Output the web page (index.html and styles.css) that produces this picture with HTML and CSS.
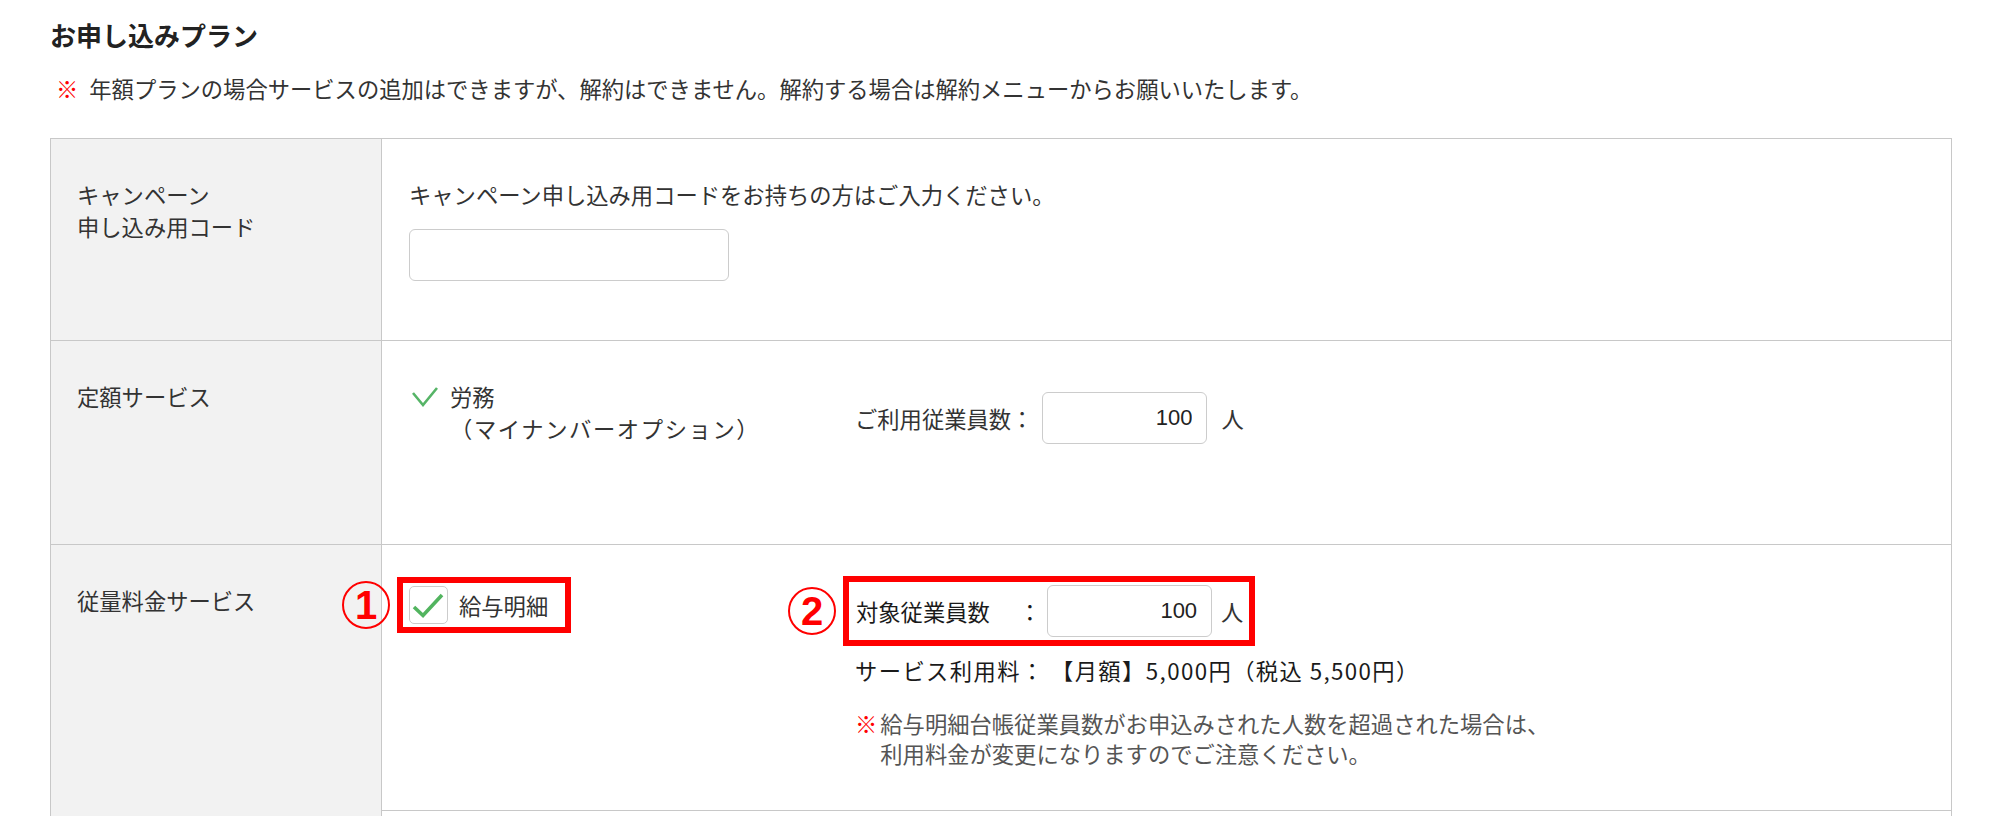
FILE: index.html
```html
<!DOCTYPE html>
<html lang="ja">
<head>
    <meta charset="UTF-8">
    <title>お申し込みプラン</title>
    <link rel="stylesheet" href="styles.css">
</head>
<body>
<div class="page">
    <h2 class="title">お申し込みプラン</h2>
    <p class="notice"><span class="kome">※</span>年額プランの場合サービスの追加はできますが、解約はできません。解約する場合は解約メニューからお願いいたします。</p>

    <div class="plan">
        <!-- キャンペーンコード -->
        <div class="plan-label">キャンペーン<br>申し込み用コード</div>
        <div class="plan-body">
            <p class="lead">キャンペーン申し込み用コードをお持ちの方はご入力ください。</p>
            <input class="code-input" type="text">
        </div>

        <!-- 定額サービス -->
        <div class="plan-label">定額サービス</div>
        <div class="plan-body plan-cols">
            <div class="fixed-item">
                <svg class="tick" width="28" height="22" viewBox="0 0 28 22">
                    <polyline points="2,8 12,20 26,3" fill="none" stroke="#56b467" stroke-width="2.6"/>
                </svg>
                <div>労務<br><span class="option">（マイナンバーオプション）</span></div>
            </div>
            <div class="count-row count-fixed">
                <span>ご利用従業員数：</span>
                <input class="count-input" type="text" value="100">
                <span class="unit">人</span>
            </div>
        </div>

        <!-- 従量料金サービス -->
        <div class="plan-label plan-label-tall">従量料金サービス</div>
        <div class="plan-body plan-cols metered">
            <div>
                <label class="mark mark-1">
                    <span class="num">1</span>
                    <span class="checkbox">
                        <svg width="39" height="38" viewBox="0 0 39 38">
                            <polyline points="5,21 14,29.5 33,9" fill="none" stroke="#52b45f" stroke-width="3.6"/>
                        </svg>
                    </span>
                    給与明細
                </label>
            </div>
            <div>
                <div class="mark mark-2 count-row">
                    <span class="num">2</span>
                    <span>対象従業員数</span>
                    <span class="colon">：</span>
                    <input class="count-input" type="text" value="100">
                    <span class="unit">人</span>
                </div>
                <p class="fee">サービス利用料： 【月額】5,000円（税込 5,500円）</p>
                <p class="caution"><span class="kome">※</span><span>給与明細台帳従業員数がお申込みされた人数を超過された場合は、<br>利用料金が変更になりますのでご注意ください。</span></p>
            </div>
        </div>

        <div class="plan-body"></div>
    </div>
</div>
</body>
</html>
```

FILE: styles.css
```css
body {
    margin: 0;
    background: #fff;
    color: #333;
    font-family: "Noto Sans CJK JP", "Noto Sans", sans-serif;
    font-size: 22.3px;
}

.page {
    padding: 16px 0 0 50px;
}

.title {
    margin: 0;
    font-size: 26px;
    line-height: 38px;
    font-weight: bold;
    color: #222;
}

.notice {
    margin: 18px 0 0;
    line-height: 32px;
}

.kome {
    color: #f00;
    font-weight: bold;
}

.notice .kome {
    margin: 0 11px 0 6px;
}

.plan {
    display: grid;
    grid-template-columns: 331px 1fr;
    grid-template-rows: 202px 204px 266px 120px;
    width: 1902px;
    margin-top: 34px;
    border-top: 1px solid #c8c8c8;
    border-left: 1px solid #c8c8c8;
    box-sizing: border-box;
}

.plan-label,
.plan-body {
    border-right: 1px solid #c8c8c8;
    border-bottom: 1px solid #c8c8c8;
    box-sizing: border-box;
    line-height: 32px;
}

.plan-label {
    background: #f2f2f2;
    padding: 39px 0 0 26px;
}

.plan-label-tall {
    grid-row: span 2;
}

.plan-body {
    padding: 39px 0 0 27px;
}

.lead {
    margin: 0;
}

.code-input {
    display: block;
    width: 320px;
    height: 52px;
    margin-top: 19px;
    border: 1px solid #ccc;
    border-radius: 6px;
    box-sizing: border-box;
}

.plan-cols {
    display: grid;
    grid-template-columns: 446px 1fr;
    align-items: start;
}

.fixed-item {
    display: flex;
}

.option {
    letter-spacing: 1.6px;
}

.tick {
    margin: 5px 11px 0 2px;
    flex: none;
}

.count-row {
    display: flex;
    align-items: center;
}

.count-fixed {
    margin-top: 12px;
}

.count-input {
    width: 165px;
    height: 52px;
    margin-left: 9px;
    padding: 0 14px 0 0;
    border: 1px solid #ccc;
    border-radius: 6px;
    box-sizing: border-box;
    text-align: right;
    font-family: "Liberation Sans", "Noto Sans", sans-serif;
    font-size: 22px;
    color: #222;
}

.unit {
    margin-left: 14px;
}

/* 注釈の赤枠 */
.metered {
    padding-top: 31px;
}

.mark {
    position: relative;
    border: 6px solid #f00;
    width: fit-content;
    margin-left: -12px;
}

.mark-1 {
    display: inline-flex;
    align-items: center;
    margin-top: 1px;
    padding: 3px 17px 3px 6px;
}

.mark-2 {
    padding: 3px 6px 3px 7px;
    color: #1a1a1a;
}

.mark-2 .count-input {
    margin-left: 6px;
}

.mark-2 .unit {
    margin-left: 9px;
    color: #333;
}

.colon {
    margin-left: 29px;
}

.num {
    position: absolute;
    left: -61px;
    top: 50%;
    transform: translateY(-50%);
    display: flex;
    align-items: center;
    justify-content: center;
    width: 48px;
    height: 48px;
    border: 2px solid #f00;
    border-radius: 50%;
    box-sizing: border-box;
    color: #f00;
    font-family: "Liberation Sans", sans-serif;
    font-weight: bold;
    font-size: 40px;
    line-height: 1;
}

.checkbox {
    display: block;
    width: 39px;
    height: 38px;
    margin-right: 11px;
    border: 1px solid #ccc;
    border-radius: 5px;
    box-sizing: border-box;
    background: #fff;
}

.checkbox svg {
    display: block;
    margin: -1px;
}

.fee {
    margin: 8px 0 0;
    color: #1a1a1a;
    letter-spacing: 1.4px;
}

.caution {
    display: flex;
    margin: 22px 0 0;
    line-height: 30px;
    color: #555;
}

.caution .kome {
    margin-right: 3px;
}
```
